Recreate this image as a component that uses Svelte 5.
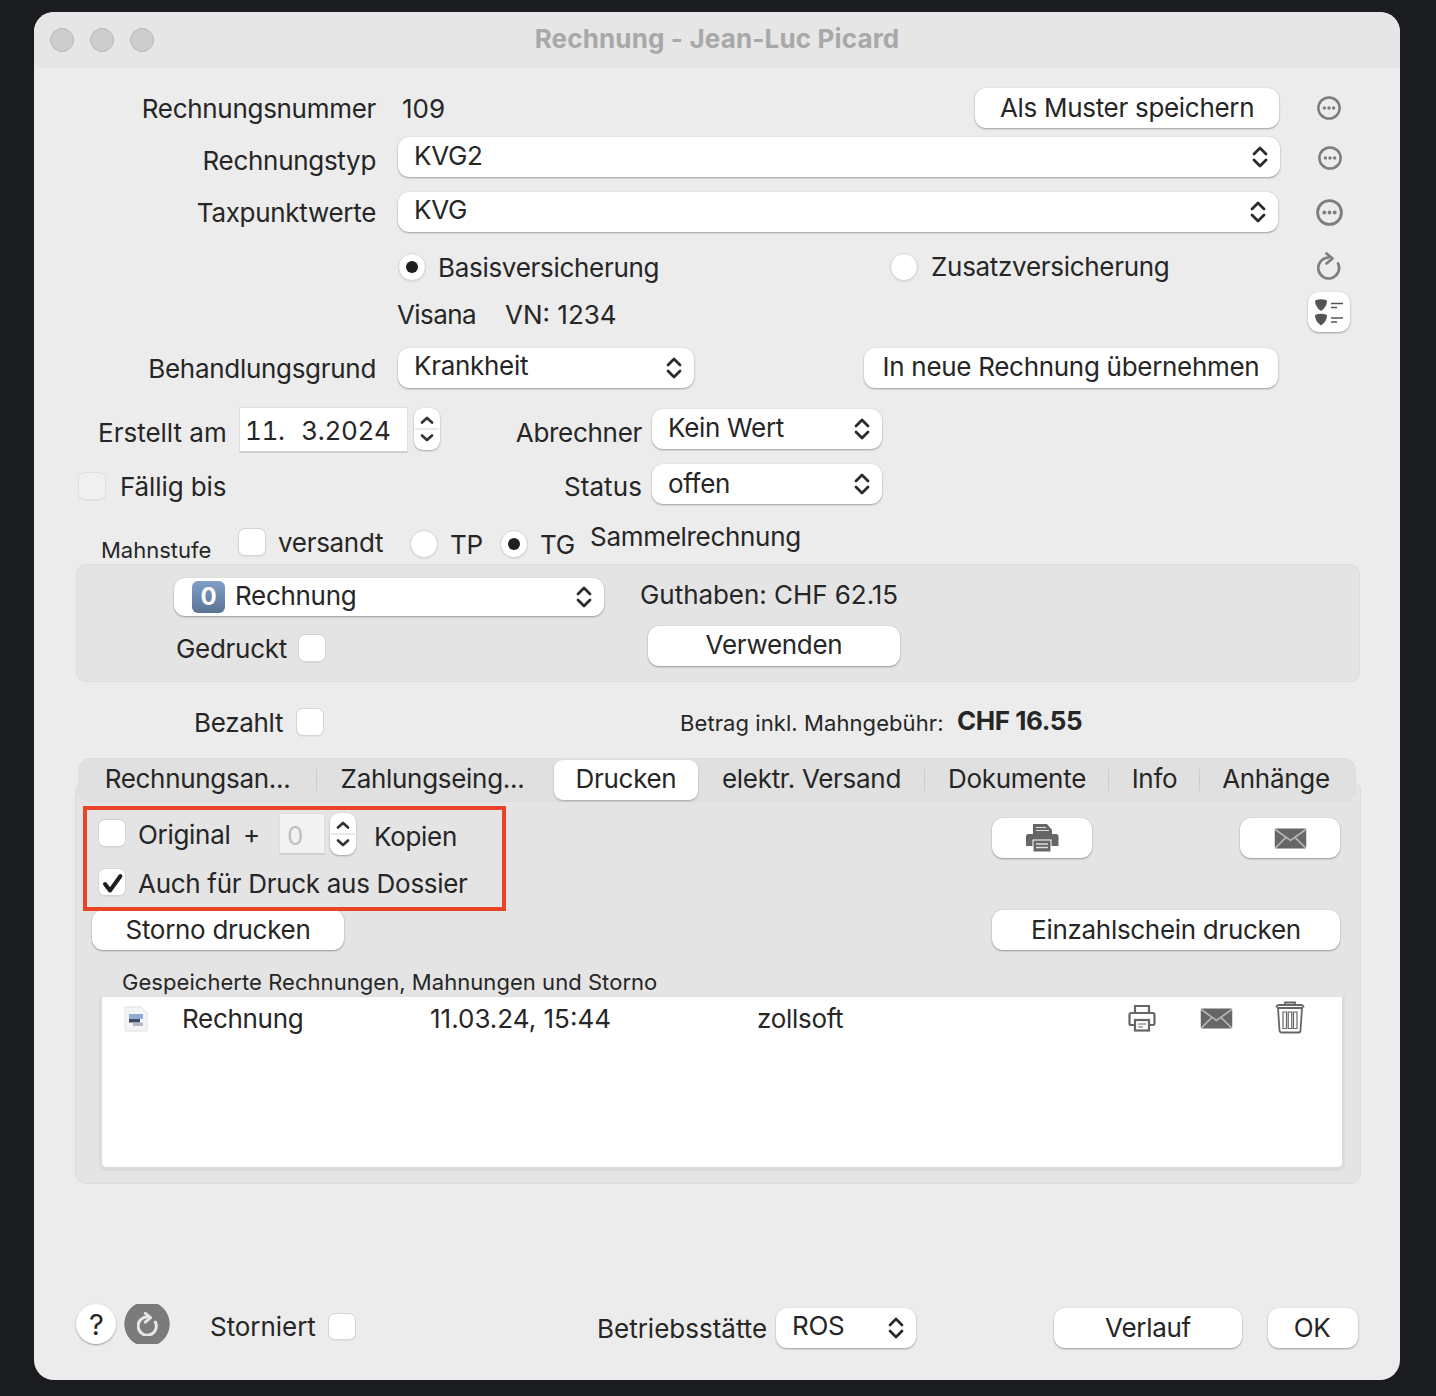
<script>
  const tabs = ['Rechnungsan...', 'Zahlungseing...', 'Drucken', 'elektr. Versand', 'Dokumente', 'Info', 'Anhänge'];
</script>

{#snippet chev()}
  <svg class="chev" viewBox="0 0 16 26" width="16" height="26" aria-hidden="true"><path d="M2 10 8 4l6 6M2 16l6 6 6-6" fill="none" stroke="#2a2a2a" stroke-width="2.8" stroke-linecap="round" stroke-linejoin="round"/></svg>
{/snippet}

{#snippet more(size)}
  <svg viewBox="0 0 24 24" width={size} height={size} aria-hidden="true"><circle cx="12" cy="12" r="10.6" fill="none" stroke="#7d7d7d" stroke-width="2.5"/><circle cx="7.4" cy="12" r="1.7" fill="#7d7d7d"/><circle cx="12" cy="12" r="1.7" fill="#7d7d7d"/><circle cx="16.6" cy="12" r="1.7" fill="#7d7d7d"/></svg>
{/snippet}

{#snippet redo(size, color, sw)}
  <svg viewBox="0 0 24 28" width={size} height={size * 28 / 24} aria-hidden="true"><path d="M11 5.700A10.400 10.400 0 1 0 21 11.500" fill="none" stroke={color} stroke-width={sw} stroke-linecap="round"/><path d="M9.500 1.500 15.500 6.500 9.500 11.500" fill="none" stroke={color} stroke-width={sw} stroke-linecap="round" stroke-linejoin="round"/></svg>
{/snippet}

{#snippet stepper()}
  <span class="stepper">
    <svg viewBox="0 0 26 42" width="26" height="42" aria-hidden="true"><path d="M8 14.5l5-4.5 5 4.5M8 27.5l5 4.5 5-4.5" fill="none" stroke="#333" stroke-width="2.7" stroke-linecap="round" stroke-linejoin="round"/><path d="M1 21h24" stroke="#e2e2e2" stroke-width="1.5"/></svg>
  </span>
{/snippet}

{#snippet envelope()}
  <svg viewBox="0 0 34 22" width="33" height="21" aria-hidden="true"><rect x="0.5" y="0.5" width="33" height="21" rx="1.5" fill="#666"/><path d="M1 1.500 17 13 33 1.500M1 21l11-11M33 21 22 10" fill="none" stroke="#b4b4b4" stroke-width="1.800"/></svg>
{/snippet}

<div class="window">
  <header class="titlebar">
    <span class="light"></span><span class="light"></span><span class="light"></span>
    <h1>Rechnung - Jean-Luc Picard</h1>
  </header>

  <div class="r r1">
    <span class="lab">Rechnungsnummer</span>
    <span class="num">109</span>
    <button class="btn muster">Als Muster speichern</button>
    <span class="side">{@render more(24)}</span>
  </div>

  <div class="r r2">
    <span class="lab">Rechnungstyp</span>
    <div class="sel typ"><span>KVG2</span>{@render chev()}</div>
    <span class="side">{@render more(24)}</span>
  </div>

  <div class="r r3">
    <span class="lab">Taxpunktwerte</span>
    <div class="sel tax"><span>KVG</span>{@render chev()}</div>
    <span class="side s3">{@render more(27)}</span>
  </div>

  <div class="r r4">
    <span class="radio on basis"></span>
    <span class="basis-t">Basisversicherung</span>
    <span class="radio zus"></span>
    <span class="zus-t">Zusatzversicherung</span>
    <span class="side s4">{@render redo(24, '#7d7d7d', 2.7)}</span>
  </div>

  <div class="r r5">
    <span class="vis">Visana</span>
    <span class="vn">VN: 1234</span>
    <button class="btn shield" aria-label="Liste">
      <svg viewBox="0 0 30 30" width="30" height="30" aria-hidden="true">
        <path d="M1 3.5q6-2.5 12 0 0 6.5-6 10.5-6-4-6-10.5zM1 18q6-2.5 12 0 0 6.5-6 10.5-6-4-6-10.5z" fill="#555"/>
        <path d="M17 6.5h12M17 10.5h6M17 21h12M17 25h6" stroke="#555" stroke-width="1.6"/>
      </svg>
    </button>
  </div>

  <div class="r r6">
    <span class="lab">Behandlungsgrund</span>
    <div class="sel grund"><span>Krankheit</span>{@render chev()}</div>
    <button class="btn neue">In neue Rechnung übernehmen</button>
  </div>

  <div class="r r7">
    <span class="erst">Erstellt am</span>
    <span class="field date">11.&nbsp; 3.2024</span>
    {@render stepper()}
    <span class="lab2 abr">Abrechner</span>
    <div class="sel sm"><span>Kein Wert</span>{@render chev()}</div>
  </div>

  <div class="r r8">
    <span class="check dim"></span>
    <span class="faellig">Fällig bis</span>
    <span class="lab2 stat">Status</span>
    <div class="sel sm"><span>offen</span>{@render chev()}</div>
  </div>

  <div class="r r9">
    <span class="mahn">Mahnstufe</span>
    <span class="check vers"></span>
    <span class="vers-t">versandt</span>
    <span class="radio tp"></span>
    <span class="tp-t">TP</span>
    <span class="radio on tg"></span>
    <span class="tg-t">TG</span>
    <span class="sammel">Sammelrechnung</span>
  </div>

  <section class="box">
    <div class="box-a">
      <div class="sel rech"><span class="badge">0</span><span class="rech-t">Rechnung</span>{@render chev()}</div>
      <span class="guth">Guthaben: CHF 62.15</span>
    </div>
    <div class="box-b">
      <span class="ged">Gedruckt</span>
      <span class="check ged-c"></span>
      <button class="btn verw">Verwenden</button>
    </div>
  </section>

  <div class="r r10">
    <span class="bez">Bezahlt</span>
    <span class="check bez-c"></span>
    <span class="betrag">Betrag inkl. Mahngebühr:</span>
    <strong class="chf">CHF 16.55</strong>
  </div>

  <nav class="tabs">
    {#each tabs as t, i}
      <span class="tab" class:active={i === 2} class:sep={i === 0 || i === 3 || i === 4 || i === 5}>{t}</span>
    {/each}
  </nav>

  <section class="pane">
    <div class="highlight"></div>
    <div class="p1">
      <span class="check c-orig"></span>
      <span class="orig">Original</span>
      <span class="plus">+</span>
      <span class="field copies">0</span>
      {@render stepper()}
      <span class="kop">Kopien</span>
      <button class="btn icon b-print" aria-label="Drucken">
        <svg viewBox="0 0 34 30" width="34" height="30" aria-hidden="true">
          <path d="M8 1h14l5 6v5H8z" fill="#666"/><path d="M11 4.5h10M11 7.5h13" stroke="#ddd" stroke-width="1.2"/>
          <path d="M3 11h28a2.500 2.500 0 0 1 2.500 2.500V23H1V13.500A2.500 2.500 0 0 1 3 11z" fill="#666"/>
          <rect x="8" y="17" width="18" height="12" fill="#666" stroke="#fff" stroke-width="1"/>
          <path d="M11 21h12M11 24.500h12" stroke="#ddd" stroke-width="1.3"/>
        </svg>
      </button>
      <button class="btn icon b-env" aria-label="E-Mail">{@render envelope()}</button>
    </div>
    <div class="p2">
      <span class="check on c-auch">
        <svg viewBox="0 0 28 28" width="28" height="28" aria-hidden="true"><path d="M6 15l5 6.500L21.500 7" fill="none" stroke="#1e1e1e" stroke-width="4" stroke-linecap="round" stroke-linejoin="round"/></svg>
      </span>
      <span class="auch">Auch für Druck aus Dossier</span>
    </div>
    <div class="p3">
      <button class="btn storno">Storno drucken</button>
      <button class="btn einz">Einzahlschein drucken</button>
    </div>
    <div class="cap">Gespeicherte Rechnungen, Mahnungen und Storno</div>
    <div class="list">
      <div class="item">
        <svg class="doc" viewBox="0 0 24 26" width="24" height="26" aria-hidden="true">
          <path d="M1 1h16l6 6v18H1z" fill="#f4f4f4" stroke="#e0e0e0"/>
          <rect x="5" y="8" width="14" height="5" fill="#93acd6"/>
          <rect x="5" y="13" width="11" height="3.500" fill="#3f4a63"/>
          <rect x="9" y="16.500" width="10" height="3.500" fill="#aeb6c4"/>
        </svg>
        <span class="i-name">Rechnung</span>
        <span class="i-date">11.03.24, 15:44</span>
        <span class="i-user">zollsoft</span>
        <svg class="i-print" viewBox="0 0 28 28" width="28" height="28" aria-hidden="true">
          <path d="M7 9V2h14v7M7 21H3a1.500 1.500 0 0 1-1.500-1.500v-9A1.500 1.500 0 0 1 3 9h22a1.500 1.500 0 0 1 1.500 1.500v9A1.500 1.500 0 0 1 25 21h-4" fill="none" stroke="#666" stroke-width="2.200"/>
          <rect x="7" y="16" width="14" height="10.500" fill="none" stroke="#666" stroke-width="2.200"/>
          <path d="M10 20h8M10 23h5" stroke="#666" stroke-width="1.200"/>
        </svg>
        <span class="i-env">{@render envelope()}</span>
        <svg class="i-trash" viewBox="0 0 30 34" width="30" height="34" aria-hidden="true">
          <path d="M10 5V2.500h10V5M1.500 7.500a2.500 2.500 0 0 1 2.500-2.500h22a2.500 2.500 0 0 1 2.500 2.500M3 8h24l-1.500 22.500a2 2 0 0 1-2 2h-17a2 2 0 0 1-2-2z" fill="none" stroke="#666" stroke-width="1.800"/>
          <path d="M8 12h3.500v16.500H8zM13.250 12h3.500v16.500h-3.500zM18.500 12H22v16.500h-3.500z" fill="none" stroke="#666" stroke-width="1.200"/>
        </svg>
      </div>
    </div>
  </section>

  <footer class="foot">
    <button class="help">?</button>
    <span class="rot">{@render redo(21, '#e6e6e6', 3.400)}</span>
    <span class="storn">Storniert</span>
    <span class="check st-c"></span>
    <span class="betr">Betriebsstätte</span>
    <div class="sel ros"><span>ROS</span>{@render chev()}</div>
    <button class="btn verl">Verlauf</button>
    <button class="btn ok">OK</button>
  </footer>
</div>

<style>
  :global(body) { margin: 0; background: #1b1c20; }
  .window {
    box-sizing: border-box; width: 1366px; height: 1368px; margin: 12px 0 16px 34px;
    background: #ececec; border-radius: 20px; overflow: hidden; color: #262626;
    font: 26px/1 Inter, "Liberation Sans", sans-serif; letter-spacing: -.3px;
  }
  .titlebar { position: relative; display: flex; align-items: center; gap: 16px; height: 56px; padding-left: 16px; background: #e6e6e6; box-sizing: border-box; }
  .light { box-sizing: border-box; width: 24px; height: 24px; border-radius: 50%; background: #cdcdcd; border: 1px solid #b8b8b8; margin-top: 0; }
  h1 { margin: 0; font: 700 26px/1 Inter, sans-serif; letter-spacing: .15px; color: #a8a8a8; position: absolute; left: 0; right: 0; top: 14px; text-align: center; pointer-events: none; }

  .r { display: flex; align-items: center; white-space: nowrap; }
  .r > *, .p1 > *, .p2 > *, .p3 > *, .foot > *, .box-a > *, .box-b > *, .item > * { flex: none; }
  .lab { width: 342px; text-align: right; }
  .btn { box-sizing: border-box; height: 40px; padding: 0; border: 0; border-radius: 11px; background: #fff; color: #262626; font: inherit; letter-spacing: inherit; text-align: center; box-shadow: 0 1px 2px rgba(0,0,0,.32), 0 0 1px rgba(0,0,0,.16); display: inline-flex; align-items: center; justify-content: center; }
  .sel { box-sizing: border-box; height: 40px; display: flex; align-items: center; justify-content: space-between; padding: 0 12px 0 16px; background: #fff; border-radius: 11px; box-shadow: 0 1px 2px rgba(0,0,0,.32), 0 0 1px rgba(0,0,0,.16); }
  .sel > span { margin-top: -2px; }
  .chev { flex: none; }
  .check { box-sizing: border-box; display: block; width: 28px; height: 28px; background: #fff; border: 1px solid #d4d4d4; border-radius: 7px; box-shadow: 0 1px 1px rgba(0,0,0,.05); }
  .check.dim { background: #f0f0f0; border-color: #e0e0e0; }
  .radio { box-sizing: border-box; position: relative; display: block; width: 28px; height: 28px; background: #fff; border-radius: 50%; border: 1px solid #d4d4d4; box-shadow: 0 1px 1px rgba(0,0,0,.08); }
  .radio.on::after { content: ""; position: absolute; left: 7px; top: 7px; width: 12px; height: 12px; border-radius: 50%; background: #1f1f1f; }
  .side { width: 60px; margin-left: 20px; display: flex; justify-content: center; }
  .field { box-sizing: border-box; display: flex; align-items: center; background: #fff; border: 1px solid #dedede; border-bottom: 2px solid #cfcfcf; }
  .stepper { display: block; width: 26px; height: 42px; background: #fff; border-radius: 9px; box-shadow: 0 1px 2px rgba(0,0,0,.28), 0 0 1px rgba(0,0,0,.14); line-height: 0; }

  .r1 { margin-top: 20px; height: 40px; }
  .num { margin-left: 26px; margin-top: 2px; letter-spacing: 0; }
  .r1 .lab { margin-top: 2px; }
  .muster { width: 304px; margin-left: 530px; }
  .r2 { margin-top: 9px; height: 40px; }
  .r2 .lab { margin-top: 8px; }
  .typ { width: 882px; margin-left: 22px; }
  .r2 .side { margin-top: 2px; }
  .r3 { margin-top: 15px; height: 40px; }
  .r3 .lab { margin-top: 2px; }
  .tax { width: 880px; margin-left: 22px; }
  .r3 .sel > span { margin-top: -4px; }
  .s3 { margin-left: 21px; width: 60px; }
  .r4 { margin-top: 15px; height: 40px; }
  .basis { margin-left: 364px; }
  .basis-t { margin-left: 12px; width: 452px; margin-top: 2px; }
  .zus-t { margin-left: 13px; width: 368px; }
  .s4 { margin-left: 0; width: 60px; margin-top: -2px; }
  .r5 { margin-top: 5px; height: 40px; }
  .vis { margin-left: 363px; margin-top: 6px; width: 108px; letter-spacing: -.6px; }
  .vn { margin-top: 6px; width: 803px; letter-spacing: 0; }
  .shield { width: 42px; }
  .r6 { margin-top: 15px; height: 41px; }
  .r6 .lab { margin-top: 3px; }
  .grund { width: 296px; margin-left: 22px; }
  .r6 .sel > span { margin-top: -4px; }
  .neue { width: 414px; margin-left: 170px; padding-bottom: 2px; }
  .r7 { margin-top: 19px; height: 46px; }
  .erst { margin-left: 64px; width: 142px; margin-top: 6px; letter-spacing: 0; }
  .date { width: 169px; height: 46px; padding: 2px 0 0 5px; font-variant-numeric: tabular-nums; letter-spacing: -.3px; word-spacing: 1.500px; margin-left: -1px; }
  .r7 .stepper { margin-left: 6px; margin-top: -2px; }
  .lab2 { text-align: right; }
  .abr { width: 202px; margin-top: 6px; }
  .sm { width: 230px; margin-left: 10px; }
  .r7 .sm { margin-top: -2px; }
  .r8 { margin-top: 11px; height: 40px; }
  .r8 .check { margin-left: 44px; margin-top: 4px; }
  .faellig { margin-left: 14px; width: 246px; margin-top: 6px; letter-spacing: -.1px; }
  .stat { width: 264px; margin-left: 12px; margin-top: 6px; letter-spacing: .1px; }
  .r8 .sel > span { margin-top: 0; }
  .r9 { margin-top: 20px; height: 36px; }
  .mahn { font-size: 22px; letter-spacing: 0; margin-left: 67px; width: 137px; margin-top: 16px; }
  .r9 .check { margin-top: 0; }
  .r9 .radio { margin-top: 4px; }
  .vers-t { margin-left: 12px; width: 132px; margin-top: 1px; }
  .r9 .tp-t, .r9 .tg-t { margin-top: 6px; }
  .tp-t { margin-left: 12px; width: 50px; }
  .tg-t { margin-left: 12px; width: 50px; }
  .sammel { margin-top: -10px; }

  .box { box-sizing: border-box; width: 1284px; height: 118px; margin: 4px 0 0 42px; background: #e4e4e4; border: 1px solid #dcdcdc; border-radius: 10px; padding-top: 13px; }
  .box-a { display: flex; align-items: center; height: 38px; }
  .rech { width: 430px; height: 38px; margin-left: 97px; justify-content: flex-start; padding-left: 18px; }
  .rech .chev { margin-left: auto; }
  .badge { box-sizing: border-box; width: 33px; height: 32px; margin: 0 !important; border-radius: 6px; background: linear-gradient(#7f9fc8, #5a7394); color: #fff; font-weight: 700; font-size: 24px; display: flex; align-items: center; justify-content: center; }
  .rech-t { margin-left: 10px; margin-top: -3px !important; }
  .guth { margin-left: 36px; margin-top: -4px; letter-spacing: -.05px; }
  .box-b { display: flex; align-items: center; height: 40px; margin-top: 10px; }
  .ged { margin-left: 99px; width: 122px; margin-top: 5px; }
  .ged-c { margin-top: 4px; }
  .verw { width: 252px; margin-left: 322px; padding-bottom: 2px; }

  .r10 { margin-top: 22px; height: 36px; }
  .bez { margin-left: 160px; width: 102px; margin-top: 2px; }
  .betrag { font-size: 22px; letter-spacing: .08px; margin-left: 356px; width: 277px; margin-top: 1px; }
  .chf { font-weight: 700; letter-spacing: -.45px; margin-top: -3px; }

  .tabs { position: relative; z-index: 1; box-sizing: border-box; display: grid; grid-template-columns: 239px 231px 6px 144px 227px 184px 91px 152px; width: 1278px; height: 44px; margin: 18px 0 0 44px; padding: 2px 0; background: #e0e0e0; border-radius: 13px; box-shadow: inset 0 0 0 1px #dcdcdc; }
  .tab { display: flex; align-items: center; justify-content: center; position: relative; padding-bottom: 2px; }
  .tab:nth-child(3) { grid-column: 4; }
  .tab.active { background: #fff; border-radius: 9px; box-shadow: 0 1px 2px rgba(0,0,0,.28); }
  .tab.sep::after { content: ""; position: absolute; right: 0; top: 9px; bottom: 9px; width: 1.500px; background: #cbcbcb; }

  .pane { position: relative; box-sizing: border-box; width: 1286px; height: 404px; margin: -22px 0 0 41px; padding-top: 32px; background: #e4e4e4; border: 1px solid #dcdcdc; border-radius: 11px; }
  .highlight { position: absolute; box-sizing: border-box; left: 7px; top: 25px; width: 423px; height: 105px; border: 4px solid #ea4428; pointer-events: none; }
  .p1 { display: flex; align-items: center; height: 42px; }
  .c-orig { margin-left: 22px; margin-top: -2px; }
  .orig { margin-left: 12px; width: 107px; margin-top: 2px; }
  .plus { width: 34px; margin-top: 0; margin-left: -2px; margin-right: 2px; }
  .copies { width: 46px; height: 42px; padding: 4px 0 0 7px; color: #c0c0c0; background: #f2f2f2; }
  .p1 .stepper { margin-left: 5px; }
  .kop { margin-left: 18px; width: 618px; margin-top: 6px; }
  .icon { width: 100px; margin-top: 8px; }
  .b-env { margin-left: 148px; }
  .p2 { display: flex; align-items: center; height: 28px; margin-top: 13px; }
  .c-auch { margin-left: 22px; line-height: 0; }
  .auch { margin-left: 12px; margin-top: 4px; }
  .p3 { display: flex; align-items: center; height: 40px; margin-top: 14px; }
  .storno { width: 252px; margin-left: 16px; padding-bottom: 1px; }
  .einz { width: 348px; margin-left: 648px; padding-bottom: 1px; }
  .cap { font-size: 22px; letter-spacing: .05px; margin: 21px 0 0 46px; height: 25px; line-height: 22px; }
  .list { box-sizing: border-box; width: 1246px; height: 175px; margin-left: 23px; background: #fff; border-style: solid; border-color: #e0e0e0 #dadada #dadada #dcdcdc; border-width: 1px 3px 4px 3px; border-radius: 2px 2px 8px 8px; }
  .item { display: flex; align-items: center; height: 34px; margin-top: 5px; }
  .doc { margin-left: 22px; }
  .i-name { margin-left: 34px; width: 248px; margin-top: 0; }
  .i-date { width: 327px; margin-top: 0; letter-spacing: 0; }
  .i-user { width: 371px; margin-top: 0; }
  .i-env { margin-left: 44px; line-height: 0; margin-top: -2px; }
  .i-trash { margin-left: 42px; margin-top: -5px; }
  .i-print { margin-top: -3px; }

  .foot { display: flex; align-items: center; height: 44px; margin-top: 120px; }
  .help { width: 40px; height: 40px; margin: -4px 0 0 42px; padding: 0 0 0 1px; border: 0; border-radius: 50%; background: #fff; color: #262626; font: inherit; font-size: 29px; box-shadow: 0 1px 2px rgba(0,0,0,.35); }
  .rot { display: flex; align-items: center; justify-content: center; width: 46px; height: 40px; margin: -4px 0 0 8px; background: radial-gradient(circle 23px at center, #7b7b7b 97%, transparent 100%); }
  .storn { margin-left: 40px; width: 118px; margin-top: 2px; letter-spacing: -.05px; }
  .st-c { margin-top: 0; height: 27px; }
  .betr { margin-left: 241px; width: 179px; margin-top: 6px; letter-spacing: 0; }
  .ros { width: 140px; margin-top: 4px; padding-left: 16px; }
  .foot .sel > span { margin-top: -4px; }
  .verl { width: 188px; margin-left: 138px; margin-top: 4px; }
  .ok { width: 90px; margin-left: 26px; margin-top: 4px; padding-right: 2px; }
</style>
